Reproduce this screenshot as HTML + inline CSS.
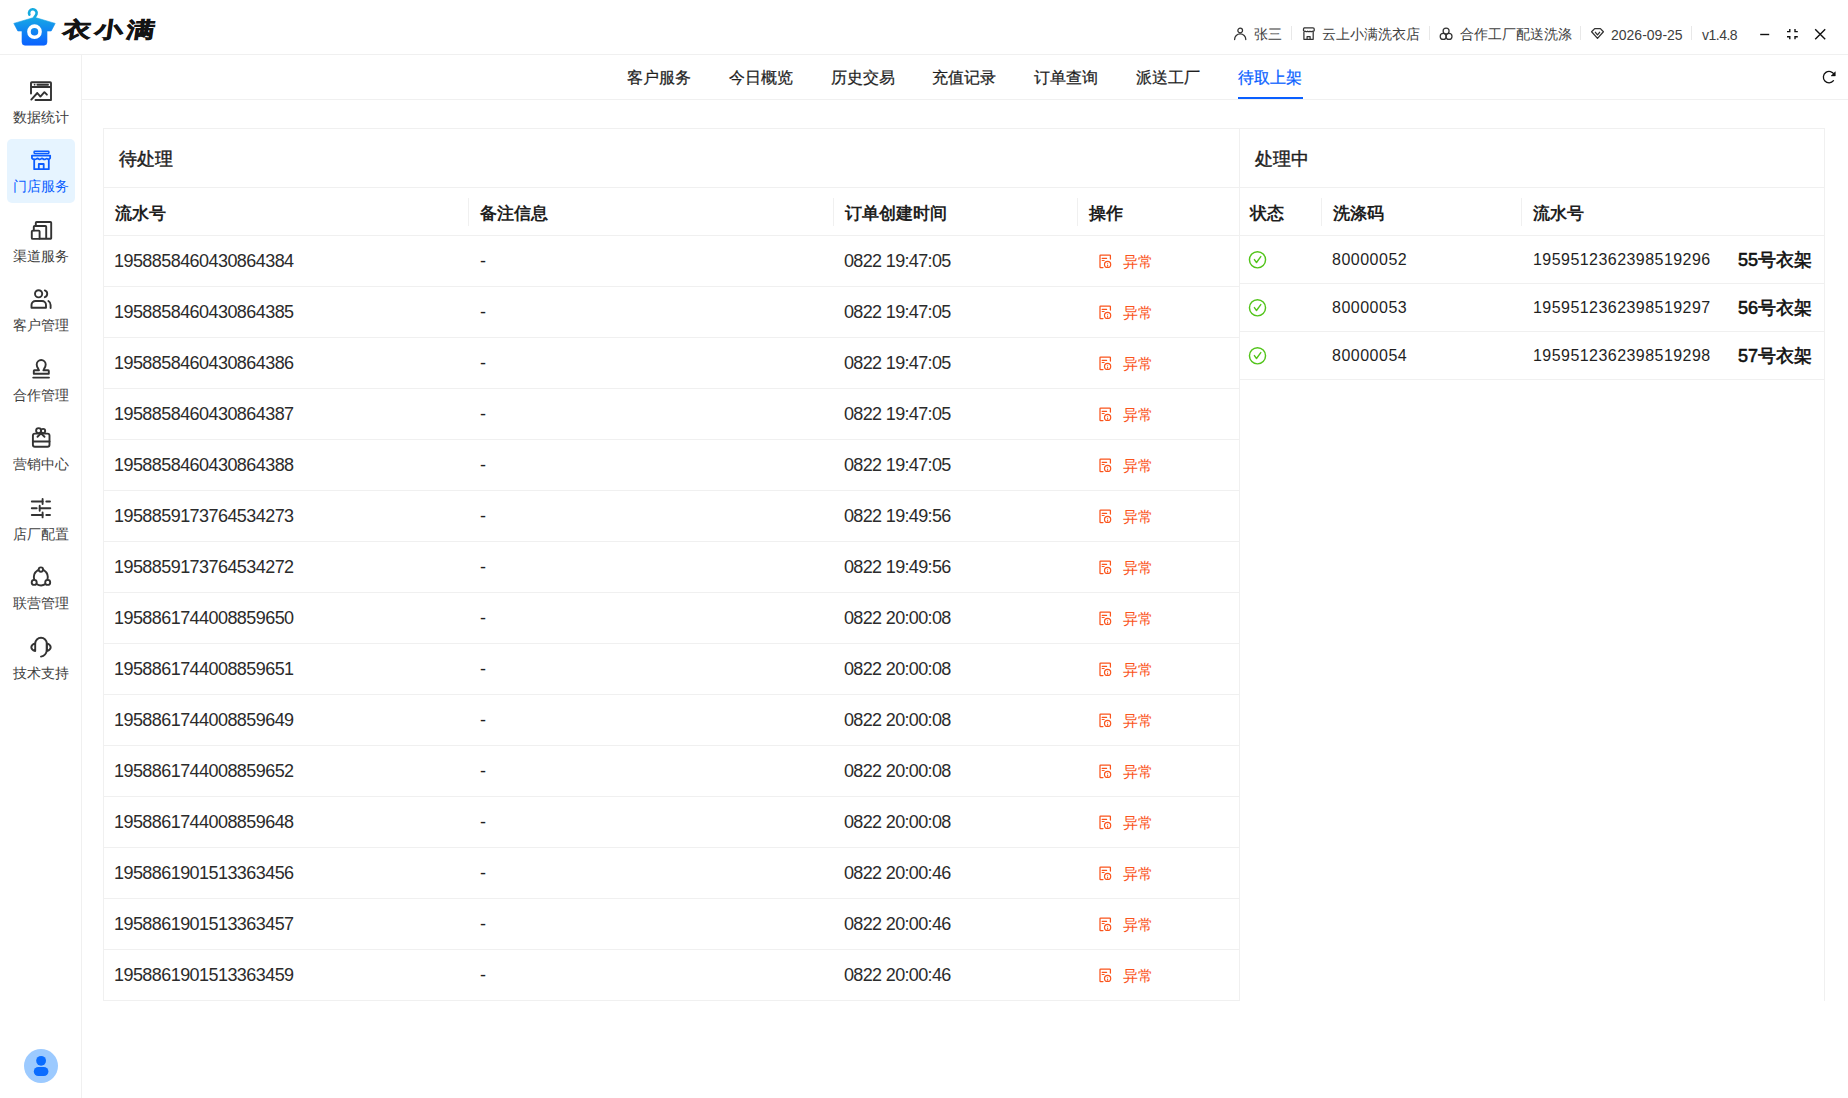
<!DOCTYPE html>
<html><head><meta charset="utf-8"><title>衣小满</title>
<style>
html,body{margin:0;padding:0;background:#fff;}
body{width:1848px;height:1098px;position:relative;overflow:hidden;font-family:"Liberation Sans",sans-serif;}
.t{position:absolute;white-space:nowrap;}
.r{position:absolute;}
.s{position:absolute;overflow:visible;}
</style></head><body>
<div class="r" style="left:0px;top:54px;width:1848px;height:1px;background:#f0f0f0;"></div>
<svg class="s" style="left:0px;top:0px" width="60" height="50" viewBox="0 0 60 50">
<defs><linearGradient id="lg" x1="0" y1="17" x2="0" y2="45" gradientUnits="userSpaceOnUse">
<stop offset="0" stop-color="#17a9e4"/><stop offset="1" stop-color="#0a62ff"/></linearGradient></defs>
<path d="M29.4 14.6 A3.8 3.8 0 1 1 36.5 14 Q35.9 15.6 34.5 17.2" fill="none" stroke="#15aadf" stroke-width="2.6" stroke-linecap="round"/>
<path d="M34.5 17.3 L55.2 23.4 L51.2 31 L47 31 L47 42 Q47 45.2 44 45.2 L25 45.2 Q22 45.2 22 42 L22 31 L17.8 31 L13.8 23.4 Z" fill="url(#lg)" stroke="url(#lg)" stroke-width="0.6" stroke-linejoin="round"/>
<circle cx="34.5" cy="31.7" r="5.55" fill="none" stroke="#fff" stroke-width="3.6"/>
</svg>
<div class="t" style="left:63px;top:15px;font-size:28px;line-height:30px;color:#141414;font-weight:900;letter-spacing:4px;-webkit-text-stroke:0.9px #141414;transform:scaleY(0.76) skewX(-6deg);transform-origin:0 50%;">衣小满</div>
<svg class="s" style="left:1232px;top:26px" width="16" height="16" viewBox="0 0 16 16"><circle cx="8.2" cy="4.5" r="2.35" fill="none" stroke="#333" stroke-width="1.25"/><path d="M2.6 13.5 a5.6 5.6 0 0 1 11.2 0" fill="none" stroke="#333" stroke-width="1.3" stroke-linecap="round"/></svg>
<div class="t" style="left:1254px;top:24px;font-size:14px;line-height:20px;color:#404040;font-weight:normal;">张三</div>
<div class="r" style="left:1291px;top:26px;width:1px;height:14px;background:#e8e8e8;"></div>
<svg class="s" style="left:1300px;top:25px" width="17" height="17" viewBox="0 0 17 17"><path d="M4.1 2.9 H13 a1.2 1.2 0 0 1 1.2 1.2 V5.6 q-.7 1.2 -1.9 .6 q-1.1 .9 -2.3 0 q-1.1 .9 -2.3 0 q-1.1 .9 -2.3 0 q-1.2 .6 -1.9 -.6 V4.1 a1.2 1.2 0 0 1 1.2 -1.2 z M3.9 7 V14.3 H13.2 V7 M7.1 14.3 V11.6 H10.1 V14.3" fill="none" stroke="#333" stroke-width="1.25" stroke-linejoin="round"/></svg>
<div class="t" style="left:1322px;top:24px;font-size:14px;line-height:20px;color:#404040;font-weight:normal;">云上小满洗衣店</div>
<div class="r" style="left:1429px;top:26px;width:1px;height:14px;background:#e8e8e8;"></div>
<svg class="s" style="left:1437px;top:26px" width="17" height="16" viewBox="0 0 17 16"><circle cx="9.1" cy="5" r="3" fill="none" stroke="#333" stroke-width="1.25"/><circle cx="6.2" cy="10.4" r="3" fill="none" stroke="#333" stroke-width="1.25"/><circle cx="12" cy="10.4" r="3" fill="none" stroke="#333" stroke-width="1.25"/></svg>
<div class="t" style="left:1460px;top:24px;font-size:14px;line-height:20px;color:#404040;font-weight:normal;">合作工厂配送洗涤</div>
<div class="r" style="left:1580px;top:26px;width:1px;height:14px;background:#e8e8e8;"></div>
<svg class="s" style="left:1589px;top:26px" width="17" height="16" viewBox="0 0 17 16"><path d="M5.7 2.6 h5.7 l3 3.2 l-5.9 6.6 l-5.9 -6.6 z" fill="none" stroke="#333" stroke-width="1.3" stroke-linejoin="round"/><path d="M6.4 6.3 l2.1 2.6 l2.1 -2.6" fill="none" stroke="#333" stroke-width="1.3" stroke-linecap="round" stroke-linejoin="round"/></svg>
<div class="t" style="left:1611px;top:25px;font-size:14px;line-height:20px;color:#404040;font-weight:normal;">2026-09-25</div>
<div class="r" style="left:1691px;top:26px;width:1px;height:14px;background:#e8e8e8;"></div>
<div class="t" style="left:1702px;top:25px;font-size:14px;line-height:20px;color:#404040;font-weight:normal;letter-spacing:-0.5px;">v1.4.8</div>
<svg class="s" style="left:1755px;top:22px" width="80" height="24" viewBox="0 0 80 24">
<path d="M5.2 12.5 h9" stroke="#111" stroke-width="1.4"/>
<path d="M34.8 7 v2.6 h-2.8 M40 7 v2.6 h2.8 M32 14.7 h2.8 v2.6 M42.8 14.7 h-2.8 v2.6" fill="none" stroke="#111" stroke-width="1.4"/>
<path d="M60.2 7.2 l10 10 M70.2 7.2 l-10 10" stroke="#111" stroke-width="1.4"/>
</svg>
<div class="r" style="left:81px;top:55px;width:1px;height:1043px;background:#f0f0f0;"></div>
<div class="r" style="left:7px;top:139px;width:68px;height:64px;background:#e6f4ff;border-radius:5px;"></div>
<div class="t" style="left:13px;top:107.0px;font-size:14px;line-height:20px;color:#404040;font-weight:normal;width:56px;text-align:center;">数据统计</div>
<div class="t" style="left:13px;top:176.4px;font-size:14px;line-height:20px;color:#0a5fff;font-weight:normal;width:56px;text-align:center;">门店服务</div>
<div class="t" style="left:13px;top:245.9px;font-size:14px;line-height:20px;color:#404040;font-weight:normal;width:56px;text-align:center;">渠道服务</div>
<div class="t" style="left:13px;top:315.3px;font-size:14px;line-height:20px;color:#404040;font-weight:normal;width:56px;text-align:center;">客户管理</div>
<div class="t" style="left:13px;top:384.8px;font-size:14px;line-height:20px;color:#404040;font-weight:normal;width:56px;text-align:center;">合作管理</div>
<div class="t" style="left:13px;top:454.2px;font-size:14px;line-height:20px;color:#404040;font-weight:normal;width:56px;text-align:center;">营销中心</div>
<div class="t" style="left:13px;top:523.6px;font-size:14px;line-height:20px;color:#404040;font-weight:normal;width:56px;text-align:center;">店厂配置</div>
<div class="t" style="left:13px;top:593.1px;font-size:14px;line-height:20px;color:#404040;font-weight:normal;width:56px;text-align:center;">联营管理</div>
<div class="t" style="left:13px;top:662.5px;font-size:14px;line-height:20px;color:#404040;font-weight:normal;width:56px;text-align:center;">技术支持</div>
<svg class="s" style="left:25px;top:75.0px" width="32" height="32" viewBox="0 0 32 32"><path d="M6 18.6 V8 a0.8 0.8 0 0 1 .8 -.8 h18.4 a.8 .8 0 0 1 .8 .8 V25 H10.5 M6 12 h20" fill="none" stroke="#333" stroke-width="1.9" stroke-linecap="round" stroke-linejoin="round"/><circle cx="9.6" cy="9.7" r=".9" fill="#333"/><path d="M12.4 9.7 h10.6" fill="none" stroke="#333" stroke-width="1.9" stroke-linecap="round" stroke-linejoin="round"/><path d="M6.3 24.6 L12.3 18 L15.4 21.6 L19.4 17.2 L21.9 19.7" fill="none" stroke="#333" stroke-width="1.9" stroke-linecap="round" stroke-linejoin="round"/></svg>
<svg class="s" style="left:25px;top:144.4px" width="32" height="32" viewBox="0 0 32 32"><g fill="none" stroke="#0a5cff" stroke-width="1.8" stroke-linejoin="round" stroke-linecap="round"><rect x="9.1" y="7.35" width="14.8" height="2.1" rx=".6" stroke-width="1.5"/><path d="M6.95 11.6 H25.15 V14.1 Q24.3 15.6 22.9 15.1 Q21.8 14.2 20.7 14.9 Q19.2 15.8 18.3 15 Q17 14.1 16 14.9 Q14.9 15.8 13.7 15 Q12.6 14.1 11.3 14.9 Q10.2 15.8 8.9 15.1 Q7.6 15.4 6.95 14.1 Z"/><path d="M9.2 16.2 V25.2 H23.8 V16.2 M13.8 25 V20 h4.9 V25"/></g></svg>
<svg class="s" style="left:25px;top:213.9px" width="32" height="32" viewBox="0 0 32 32"><rect x="6.8" y="16.6" width="7.8" height="8.3" rx="1" fill="none" stroke="#333" stroke-width="1.9" stroke-linecap="round" stroke-linejoin="round" stroke-width="1.7"/><path d="M8.8 16.4 V12.8 a.8 .8 0 0 1 .8 -.8 h10.8 a.8 .8 0 0 1 .8 .8 V24.8 H14.6 M10.8 11.8 V8.8 a.8 .8 0 0 1 .8 -.8 h13.8 a.8 .8 0 0 1 .8 .8 V24 a.8 .8 0 0 1 -.8 .8 H21.2" fill="none" stroke="#333" stroke-width="1.9" stroke-linecap="round" stroke-linejoin="round" stroke-width="1.7"/></svg>
<svg class="s" style="left:25px;top:283.3px" width="32" height="32" viewBox="0 0 32 32"><circle cx="13.6" cy="10.8" r="3.6" fill="none" stroke="#333" stroke-width="1.9" stroke-linecap="round" stroke-linejoin="round" stroke-width="1.7"/><path d="M19.8 7.4 a3.6 3.6 0 0 1 0 6.8" fill="none" stroke="#333" stroke-width="1.9" stroke-linecap="round" stroke-linejoin="round" stroke-width="1.7"/><path d="M6.5 24.7 V22 a4 4 0 0 1 4 -4 h6.5 a4 4 0 0 1 4 4 v2.7 z" fill="none" stroke="#333" stroke-width="1.9" stroke-linecap="round" stroke-linejoin="round" stroke-width="1.7"/><path d="M23.4 18 a4.6 4.6 0 0 1 2.2 4 v3" fill="none" stroke="#333" stroke-width="1.9" stroke-linecap="round" stroke-linejoin="round" stroke-width="1.7"/></svg>
<svg class="s" style="left:25px;top:352.8px" width="32" height="32" viewBox="0 0 32 32"><g transform="translate(0,-0.8)"><path d="M14 18.1 L13.2 16.4 q-1.5 -2.2 -1.5 -4.1 a4.5 4.5 0 0 1 9 0 q0 1.9 -1.5 4.1 L18.4 18.1 H23.2 a.6 .6 0 0 1 .6 .6 V21.6 H8.8 V18.7 a.6 .6 0 0 1 .6 -.6 z" fill="none" stroke="#333" stroke-width="1.9" stroke-linecap="round" stroke-linejoin="round" stroke-width="1.7"/><path d="M8.2 25.4 h15.8" fill="none" stroke="#333" stroke-width="1.9" stroke-linecap="round" stroke-linejoin="round" stroke-width="1.7"/></g></svg>
<svg class="s" style="left:25px;top:422.2px" width="32" height="32" viewBox="0 0 32 32"><rect x="7.9" y="11.6" width="16.6" height="13.2" rx="2" fill="none" stroke="#333" stroke-width="1.9" stroke-linecap="round" stroke-linejoin="round" stroke-width="1.8"/><path d="M7.9 19.5 h16.6" fill="none" stroke="#333" stroke-width="1.9" stroke-linecap="round" stroke-linejoin="round" stroke-width="1.8"/><circle cx="13.6" cy="8.6" r="2.5" fill="none" stroke="#333" stroke-width="1.9" stroke-linecap="round" stroke-linejoin="round" stroke-width="1.6"/><circle cx="18.1" cy="9" r="2.1" fill="none" stroke="#333" stroke-width="1.9" stroke-linecap="round" stroke-linejoin="round" stroke-width="1.6"/><path d="M16 11.4 l-3.5 3.4 M16 11.4 l3.5 3.4" fill="none" stroke="#333" stroke-width="1.9" stroke-linecap="round" stroke-linejoin="round" stroke-width="1.6"/></svg>
<svg class="s" style="left:25px;top:491.6px" width="32" height="32" viewBox="0 0 32 32"><path d="M6.8 9.5 h10.8 M21.3 9.5 h3.7 M6.8 16.3 h4.9 M14.7 16.3 h10.6 M6.8 23 h10.8 M21.3 23 h3.7" fill="none" stroke="#333" stroke-width="1.9" stroke-linecap="round" stroke-linejoin="round" stroke-width="1.8"/><path d="M17.6 7 v5 M14.7 13.8 v5 M17.6 20.4 v5" fill="none" stroke="#333" stroke-width="1.9" stroke-linecap="round" stroke-linejoin="round" stroke-width="2"/></svg>
<svg class="s" style="left:25px;top:561.1px" width="32" height="32" viewBox="0 0 32 32"><path d="M12.7 9.3 A8.7 8.7 0 0 0 9.2 18.6 M11.5 23 A8.7 8.7 0 0 0 20.4 23.2 M22.4 18.7 A8.7 8.7 0 0 0 19 9.3" fill="none" stroke="#333" stroke-width="1.9" stroke-linecap="round" stroke-linejoin="round" stroke-width="1.7"/><circle cx="15.9" cy="8.6" r="2.2" fill="none" stroke="#333" stroke-width="1.9" stroke-linecap="round" stroke-linejoin="round" stroke-width="1.6"/><circle cx="9.2" cy="21.4" r="2.5" fill="none" stroke="#333" stroke-width="1.9" stroke-linecap="round" stroke-linejoin="round" stroke-width="1.6"/><circle cx="22.7" cy="21.4" r="2.5" fill="none" stroke="#333" stroke-width="1.9" stroke-linecap="round" stroke-linejoin="round" stroke-width="1.6"/></svg>
<svg class="s" style="left:25px;top:630.5px" width="32" height="32" viewBox="0 0 32 32"><path d="M10.2 12.6 a5.8 5.8 0 0 1 11.6 0 V19 a7 7 0 0 1 -5.8 6.6" fill="none" stroke="#333" stroke-width="1.9" stroke-linecap="round" stroke-linejoin="round" stroke-width="1.7"/><path d="M10.2 12.4 q-3.9 1.2 -3.9 3.8 q0 2.6 3.9 3.8 z M21.8 12.4 q3.9 1.2 3.9 3.8 q0 2.6 -3.9 3.8 z" fill="none" stroke="#333" stroke-width="1.9" stroke-linecap="round" stroke-linejoin="round" stroke-width="1.6"/></svg>
<svg class="s" style="left:24px;top:1049px" width="34" height="34" viewBox="0 0 34 34"><circle cx="17" cy="17" r="17" fill="#9ccaff"/><circle cx="17.1" cy="11.8" r="4.9" fill="#0a6cff"/><rect x="9.8" y="18" width="14.6" height="9" rx="4.5" fill="#0a6cff"/></svg>
<div class="r" style="left:82px;top:99px;width:1766px;height:1px;background:#f0f0f0;"></div>
<div class="t" style="left:627.0px;top:68px;font-size:16px;line-height:20px;color:#1f1f1f;font-weight:normal;-webkit-text-stroke:0.25px #1f1f1f;">客户服务</div>
<div class="t" style="left:728.8px;top:68px;font-size:16px;line-height:20px;color:#1f1f1f;font-weight:normal;-webkit-text-stroke:0.25px #1f1f1f;">今日概览</div>
<div class="t" style="left:830.6px;top:68px;font-size:16px;line-height:20px;color:#1f1f1f;font-weight:normal;-webkit-text-stroke:0.25px #1f1f1f;">历史交易</div>
<div class="t" style="left:932.4px;top:68px;font-size:16px;line-height:20px;color:#1f1f1f;font-weight:normal;-webkit-text-stroke:0.25px #1f1f1f;">充值记录</div>
<div class="t" style="left:1034.2px;top:68px;font-size:16px;line-height:20px;color:#1f1f1f;font-weight:normal;-webkit-text-stroke:0.25px #1f1f1f;">订单查询</div>
<div class="t" style="left:1136.0px;top:68px;font-size:16px;line-height:20px;color:#1f1f1f;font-weight:normal;-webkit-text-stroke:0.25px #1f1f1f;">派送工厂</div>
<div class="t" style="left:1237.8px;top:68px;font-size:16px;line-height:20px;color:#0a5fff;font-weight:normal;-webkit-text-stroke:0.25px #0a5fff;">待取上架</div>
<div class="r" style="left:1238px;top:97px;width:65px;height:2px;background:#0a5fff;"></div>
<svg class="s" style="left:1820.7px;top:68px" width="18" height="18" viewBox="0 0 18 18"><path d="M13.2 6.6 A5.7 5.7 0 1 0 12.5 12.7" fill="none" stroke="#111" stroke-width="1.3" stroke-linecap="round"/><path d="M10 7.9 L14.3 7.9 L14.3 3.7 Z" fill="#111" stroke="#111" stroke-width="0.5" stroke-linejoin="round"/></svg>
<div class="r" style="left:103px;top:128px;width:1722px;height:1px;background:#f0f0f0;"></div>
<div class="r" style="left:103px;top:128px;width:1px;height:873px;background:#f0f0f0;"></div>
<div class="r" style="left:1239px;top:128px;width:1px;height:873px;background:#f0f0f0;"></div>
<div class="r" style="left:1824px;top:128px;width:1px;height:873px;background:#f0f0f0;"></div>
<div class="t" style="left:119px;top:148px;font-size:18px;line-height:22px;color:#1f1f1f;font-weight:normal;-webkit-text-stroke:0.45px #1f1f1f;">待处理</div>
<div class="r" style="left:103px;top:187px;width:1136px;height:1px;background:#f0f0f0;"></div>
<div class="t" style="left:115px;top:204px;font-size:17px;line-height:20px;color:#1f1f1f;font-weight:bold;">流水号</div>
<div class="r" style="left:468px;top:198px;width:1px;height:28px;background:#f0f0f0;"></div>
<div class="t" style="left:480px;top:204px;font-size:17px;line-height:20px;color:#1f1f1f;font-weight:bold;">备注信息</div>
<div class="r" style="left:833px;top:198px;width:1px;height:28px;background:#f0f0f0;"></div>
<div class="t" style="left:845px;top:204px;font-size:17px;line-height:20px;color:#1f1f1f;font-weight:bold;">订单创建时间</div>
<div class="r" style="left:1077px;top:198px;width:1px;height:28px;background:#f0f0f0;"></div>
<div class="t" style="left:1089px;top:204px;font-size:17px;line-height:20px;color:#1f1f1f;font-weight:bold;">操作</div>
<div class="r" style="left:103px;top:235px;width:1136px;height:1px;background:#f0f0f0;"></div>
<div class="t" style="left:114px;top:251px;font-size:18px;line-height:20px;color:#2b2b2b;font-weight:normal;letter-spacing:-0.56px;">1958858460430864384</div>
<div class="t" style="left:480px;top:251px;font-size:18px;line-height:20px;color:#1f1f1f;font-weight:normal;">-</div>
<div class="t" style="left:844px;top:251px;font-size:18px;line-height:20px;color:#2b2b2b;font-weight:normal;letter-spacing:-0.65px;">0822 19:47:05</div>
<svg class="s" style="left:1099px;top:254px" width="14" height="15" viewBox="0 0 14 15"><path d="M4 13.6 H1.6 a.6 .6 0 0 1 -.6 -.6 V1.6 a.6 .6 0 0 1 .6 -.6 h9.2 a.6 .6 0 0 1 .6 .6 V5" fill="none" stroke="#fa541c" stroke-width="1.25" stroke-linecap="round"/><path d="M3.2 4.4 h4.4 M3.2 6.5 h1.9" stroke="#fa541c" stroke-width="1.2" stroke-linecap="round"/><circle cx="8.6" cy="10.4" r="3.1" fill="none" stroke="#fa541c" stroke-width="1.2"/><circle cx="8.6" cy="9.3" r=".55" fill="#fa541c"/><path d="M8.6 11 v1.3" stroke="#fa541c" stroke-width="1.1" stroke-linecap="round"/></svg>
<div class="t" style="left:1123px;top:252px;font-size:15px;line-height:20px;color:#fa541c;font-weight:normal;">异常</div>
<div class="r" style="left:103px;top:286px;width:1136px;height:1px;background:#f0f0f0;"></div>
<div class="t" style="left:114px;top:302px;font-size:18px;line-height:20px;color:#2b2b2b;font-weight:normal;letter-spacing:-0.56px;">1958858460430864385</div>
<div class="t" style="left:480px;top:302px;font-size:18px;line-height:20px;color:#1f1f1f;font-weight:normal;">-</div>
<div class="t" style="left:844px;top:302px;font-size:18px;line-height:20px;color:#2b2b2b;font-weight:normal;letter-spacing:-0.65px;">0822 19:47:05</div>
<svg class="s" style="left:1099px;top:305px" width="14" height="15" viewBox="0 0 14 15"><path d="M4 13.6 H1.6 a.6 .6 0 0 1 -.6 -.6 V1.6 a.6 .6 0 0 1 .6 -.6 h9.2 a.6 .6 0 0 1 .6 .6 V5" fill="none" stroke="#fa541c" stroke-width="1.25" stroke-linecap="round"/><path d="M3.2 4.4 h4.4 M3.2 6.5 h1.9" stroke="#fa541c" stroke-width="1.2" stroke-linecap="round"/><circle cx="8.6" cy="10.4" r="3.1" fill="none" stroke="#fa541c" stroke-width="1.2"/><circle cx="8.6" cy="9.3" r=".55" fill="#fa541c"/><path d="M8.6 11 v1.3" stroke="#fa541c" stroke-width="1.1" stroke-linecap="round"/></svg>
<div class="t" style="left:1123px;top:303px;font-size:15px;line-height:20px;color:#fa541c;font-weight:normal;">异常</div>
<div class="r" style="left:103px;top:337px;width:1136px;height:1px;background:#f0f0f0;"></div>
<div class="t" style="left:114px;top:353px;font-size:18px;line-height:20px;color:#2b2b2b;font-weight:normal;letter-spacing:-0.56px;">1958858460430864386</div>
<div class="t" style="left:480px;top:353px;font-size:18px;line-height:20px;color:#1f1f1f;font-weight:normal;">-</div>
<div class="t" style="left:844px;top:353px;font-size:18px;line-height:20px;color:#2b2b2b;font-weight:normal;letter-spacing:-0.65px;">0822 19:47:05</div>
<svg class="s" style="left:1099px;top:356px" width="14" height="15" viewBox="0 0 14 15"><path d="M4 13.6 H1.6 a.6 .6 0 0 1 -.6 -.6 V1.6 a.6 .6 0 0 1 .6 -.6 h9.2 a.6 .6 0 0 1 .6 .6 V5" fill="none" stroke="#fa541c" stroke-width="1.25" stroke-linecap="round"/><path d="M3.2 4.4 h4.4 M3.2 6.5 h1.9" stroke="#fa541c" stroke-width="1.2" stroke-linecap="round"/><circle cx="8.6" cy="10.4" r="3.1" fill="none" stroke="#fa541c" stroke-width="1.2"/><circle cx="8.6" cy="9.3" r=".55" fill="#fa541c"/><path d="M8.6 11 v1.3" stroke="#fa541c" stroke-width="1.1" stroke-linecap="round"/></svg>
<div class="t" style="left:1123px;top:354px;font-size:15px;line-height:20px;color:#fa541c;font-weight:normal;">异常</div>
<div class="r" style="left:103px;top:388px;width:1136px;height:1px;background:#f0f0f0;"></div>
<div class="t" style="left:114px;top:404px;font-size:18px;line-height:20px;color:#2b2b2b;font-weight:normal;letter-spacing:-0.56px;">1958858460430864387</div>
<div class="t" style="left:480px;top:404px;font-size:18px;line-height:20px;color:#1f1f1f;font-weight:normal;">-</div>
<div class="t" style="left:844px;top:404px;font-size:18px;line-height:20px;color:#2b2b2b;font-weight:normal;letter-spacing:-0.65px;">0822 19:47:05</div>
<svg class="s" style="left:1099px;top:407px" width="14" height="15" viewBox="0 0 14 15"><path d="M4 13.6 H1.6 a.6 .6 0 0 1 -.6 -.6 V1.6 a.6 .6 0 0 1 .6 -.6 h9.2 a.6 .6 0 0 1 .6 .6 V5" fill="none" stroke="#fa541c" stroke-width="1.25" stroke-linecap="round"/><path d="M3.2 4.4 h4.4 M3.2 6.5 h1.9" stroke="#fa541c" stroke-width="1.2" stroke-linecap="round"/><circle cx="8.6" cy="10.4" r="3.1" fill="none" stroke="#fa541c" stroke-width="1.2"/><circle cx="8.6" cy="9.3" r=".55" fill="#fa541c"/><path d="M8.6 11 v1.3" stroke="#fa541c" stroke-width="1.1" stroke-linecap="round"/></svg>
<div class="t" style="left:1123px;top:405px;font-size:15px;line-height:20px;color:#fa541c;font-weight:normal;">异常</div>
<div class="r" style="left:103px;top:439px;width:1136px;height:1px;background:#f0f0f0;"></div>
<div class="t" style="left:114px;top:455px;font-size:18px;line-height:20px;color:#2b2b2b;font-weight:normal;letter-spacing:-0.56px;">1958858460430864388</div>
<div class="t" style="left:480px;top:455px;font-size:18px;line-height:20px;color:#1f1f1f;font-weight:normal;">-</div>
<div class="t" style="left:844px;top:455px;font-size:18px;line-height:20px;color:#2b2b2b;font-weight:normal;letter-spacing:-0.65px;">0822 19:47:05</div>
<svg class="s" style="left:1099px;top:458px" width="14" height="15" viewBox="0 0 14 15"><path d="M4 13.6 H1.6 a.6 .6 0 0 1 -.6 -.6 V1.6 a.6 .6 0 0 1 .6 -.6 h9.2 a.6 .6 0 0 1 .6 .6 V5" fill="none" stroke="#fa541c" stroke-width="1.25" stroke-linecap="round"/><path d="M3.2 4.4 h4.4 M3.2 6.5 h1.9" stroke="#fa541c" stroke-width="1.2" stroke-linecap="round"/><circle cx="8.6" cy="10.4" r="3.1" fill="none" stroke="#fa541c" stroke-width="1.2"/><circle cx="8.6" cy="9.3" r=".55" fill="#fa541c"/><path d="M8.6 11 v1.3" stroke="#fa541c" stroke-width="1.1" stroke-linecap="round"/></svg>
<div class="t" style="left:1123px;top:456px;font-size:15px;line-height:20px;color:#fa541c;font-weight:normal;">异常</div>
<div class="r" style="left:103px;top:490px;width:1136px;height:1px;background:#f0f0f0;"></div>
<div class="t" style="left:114px;top:506px;font-size:18px;line-height:20px;color:#2b2b2b;font-weight:normal;letter-spacing:-0.56px;">1958859173764534273</div>
<div class="t" style="left:480px;top:506px;font-size:18px;line-height:20px;color:#1f1f1f;font-weight:normal;">-</div>
<div class="t" style="left:844px;top:506px;font-size:18px;line-height:20px;color:#2b2b2b;font-weight:normal;letter-spacing:-0.65px;">0822 19:49:56</div>
<svg class="s" style="left:1099px;top:509px" width="14" height="15" viewBox="0 0 14 15"><path d="M4 13.6 H1.6 a.6 .6 0 0 1 -.6 -.6 V1.6 a.6 .6 0 0 1 .6 -.6 h9.2 a.6 .6 0 0 1 .6 .6 V5" fill="none" stroke="#fa541c" stroke-width="1.25" stroke-linecap="round"/><path d="M3.2 4.4 h4.4 M3.2 6.5 h1.9" stroke="#fa541c" stroke-width="1.2" stroke-linecap="round"/><circle cx="8.6" cy="10.4" r="3.1" fill="none" stroke="#fa541c" stroke-width="1.2"/><circle cx="8.6" cy="9.3" r=".55" fill="#fa541c"/><path d="M8.6 11 v1.3" stroke="#fa541c" stroke-width="1.1" stroke-linecap="round"/></svg>
<div class="t" style="left:1123px;top:507px;font-size:15px;line-height:20px;color:#fa541c;font-weight:normal;">异常</div>
<div class="r" style="left:103px;top:541px;width:1136px;height:1px;background:#f0f0f0;"></div>
<div class="t" style="left:114px;top:557px;font-size:18px;line-height:20px;color:#2b2b2b;font-weight:normal;letter-spacing:-0.56px;">1958859173764534272</div>
<div class="t" style="left:480px;top:557px;font-size:18px;line-height:20px;color:#1f1f1f;font-weight:normal;">-</div>
<div class="t" style="left:844px;top:557px;font-size:18px;line-height:20px;color:#2b2b2b;font-weight:normal;letter-spacing:-0.65px;">0822 19:49:56</div>
<svg class="s" style="left:1099px;top:560px" width="14" height="15" viewBox="0 0 14 15"><path d="M4 13.6 H1.6 a.6 .6 0 0 1 -.6 -.6 V1.6 a.6 .6 0 0 1 .6 -.6 h9.2 a.6 .6 0 0 1 .6 .6 V5" fill="none" stroke="#fa541c" stroke-width="1.25" stroke-linecap="round"/><path d="M3.2 4.4 h4.4 M3.2 6.5 h1.9" stroke="#fa541c" stroke-width="1.2" stroke-linecap="round"/><circle cx="8.6" cy="10.4" r="3.1" fill="none" stroke="#fa541c" stroke-width="1.2"/><circle cx="8.6" cy="9.3" r=".55" fill="#fa541c"/><path d="M8.6 11 v1.3" stroke="#fa541c" stroke-width="1.1" stroke-linecap="round"/></svg>
<div class="t" style="left:1123px;top:558px;font-size:15px;line-height:20px;color:#fa541c;font-weight:normal;">异常</div>
<div class="r" style="left:103px;top:592px;width:1136px;height:1px;background:#f0f0f0;"></div>
<div class="t" style="left:114px;top:608px;font-size:18px;line-height:20px;color:#2b2b2b;font-weight:normal;letter-spacing:-0.56px;">1958861744008859650</div>
<div class="t" style="left:480px;top:608px;font-size:18px;line-height:20px;color:#1f1f1f;font-weight:normal;">-</div>
<div class="t" style="left:844px;top:608px;font-size:18px;line-height:20px;color:#2b2b2b;font-weight:normal;letter-spacing:-0.65px;">0822 20:00:08</div>
<svg class="s" style="left:1099px;top:611px" width="14" height="15" viewBox="0 0 14 15"><path d="M4 13.6 H1.6 a.6 .6 0 0 1 -.6 -.6 V1.6 a.6 .6 0 0 1 .6 -.6 h9.2 a.6 .6 0 0 1 .6 .6 V5" fill="none" stroke="#fa541c" stroke-width="1.25" stroke-linecap="round"/><path d="M3.2 4.4 h4.4 M3.2 6.5 h1.9" stroke="#fa541c" stroke-width="1.2" stroke-linecap="round"/><circle cx="8.6" cy="10.4" r="3.1" fill="none" stroke="#fa541c" stroke-width="1.2"/><circle cx="8.6" cy="9.3" r=".55" fill="#fa541c"/><path d="M8.6 11 v1.3" stroke="#fa541c" stroke-width="1.1" stroke-linecap="round"/></svg>
<div class="t" style="left:1123px;top:609px;font-size:15px;line-height:20px;color:#fa541c;font-weight:normal;">异常</div>
<div class="r" style="left:103px;top:643px;width:1136px;height:1px;background:#f0f0f0;"></div>
<div class="t" style="left:114px;top:659px;font-size:18px;line-height:20px;color:#2b2b2b;font-weight:normal;letter-spacing:-0.56px;">1958861744008859651</div>
<div class="t" style="left:480px;top:659px;font-size:18px;line-height:20px;color:#1f1f1f;font-weight:normal;">-</div>
<div class="t" style="left:844px;top:659px;font-size:18px;line-height:20px;color:#2b2b2b;font-weight:normal;letter-spacing:-0.65px;">0822 20:00:08</div>
<svg class="s" style="left:1099px;top:662px" width="14" height="15" viewBox="0 0 14 15"><path d="M4 13.6 H1.6 a.6 .6 0 0 1 -.6 -.6 V1.6 a.6 .6 0 0 1 .6 -.6 h9.2 a.6 .6 0 0 1 .6 .6 V5" fill="none" stroke="#fa541c" stroke-width="1.25" stroke-linecap="round"/><path d="M3.2 4.4 h4.4 M3.2 6.5 h1.9" stroke="#fa541c" stroke-width="1.2" stroke-linecap="round"/><circle cx="8.6" cy="10.4" r="3.1" fill="none" stroke="#fa541c" stroke-width="1.2"/><circle cx="8.6" cy="9.3" r=".55" fill="#fa541c"/><path d="M8.6 11 v1.3" stroke="#fa541c" stroke-width="1.1" stroke-linecap="round"/></svg>
<div class="t" style="left:1123px;top:660px;font-size:15px;line-height:20px;color:#fa541c;font-weight:normal;">异常</div>
<div class="r" style="left:103px;top:694px;width:1136px;height:1px;background:#f0f0f0;"></div>
<div class="t" style="left:114px;top:710px;font-size:18px;line-height:20px;color:#2b2b2b;font-weight:normal;letter-spacing:-0.56px;">1958861744008859649</div>
<div class="t" style="left:480px;top:710px;font-size:18px;line-height:20px;color:#1f1f1f;font-weight:normal;">-</div>
<div class="t" style="left:844px;top:710px;font-size:18px;line-height:20px;color:#2b2b2b;font-weight:normal;letter-spacing:-0.65px;">0822 20:00:08</div>
<svg class="s" style="left:1099px;top:713px" width="14" height="15" viewBox="0 0 14 15"><path d="M4 13.6 H1.6 a.6 .6 0 0 1 -.6 -.6 V1.6 a.6 .6 0 0 1 .6 -.6 h9.2 a.6 .6 0 0 1 .6 .6 V5" fill="none" stroke="#fa541c" stroke-width="1.25" stroke-linecap="round"/><path d="M3.2 4.4 h4.4 M3.2 6.5 h1.9" stroke="#fa541c" stroke-width="1.2" stroke-linecap="round"/><circle cx="8.6" cy="10.4" r="3.1" fill="none" stroke="#fa541c" stroke-width="1.2"/><circle cx="8.6" cy="9.3" r=".55" fill="#fa541c"/><path d="M8.6 11 v1.3" stroke="#fa541c" stroke-width="1.1" stroke-linecap="round"/></svg>
<div class="t" style="left:1123px;top:711px;font-size:15px;line-height:20px;color:#fa541c;font-weight:normal;">异常</div>
<div class="r" style="left:103px;top:745px;width:1136px;height:1px;background:#f0f0f0;"></div>
<div class="t" style="left:114px;top:761px;font-size:18px;line-height:20px;color:#2b2b2b;font-weight:normal;letter-spacing:-0.56px;">1958861744008859652</div>
<div class="t" style="left:480px;top:761px;font-size:18px;line-height:20px;color:#1f1f1f;font-weight:normal;">-</div>
<div class="t" style="left:844px;top:761px;font-size:18px;line-height:20px;color:#2b2b2b;font-weight:normal;letter-spacing:-0.65px;">0822 20:00:08</div>
<svg class="s" style="left:1099px;top:764px" width="14" height="15" viewBox="0 0 14 15"><path d="M4 13.6 H1.6 a.6 .6 0 0 1 -.6 -.6 V1.6 a.6 .6 0 0 1 .6 -.6 h9.2 a.6 .6 0 0 1 .6 .6 V5" fill="none" stroke="#fa541c" stroke-width="1.25" stroke-linecap="round"/><path d="M3.2 4.4 h4.4 M3.2 6.5 h1.9" stroke="#fa541c" stroke-width="1.2" stroke-linecap="round"/><circle cx="8.6" cy="10.4" r="3.1" fill="none" stroke="#fa541c" stroke-width="1.2"/><circle cx="8.6" cy="9.3" r=".55" fill="#fa541c"/><path d="M8.6 11 v1.3" stroke="#fa541c" stroke-width="1.1" stroke-linecap="round"/></svg>
<div class="t" style="left:1123px;top:762px;font-size:15px;line-height:20px;color:#fa541c;font-weight:normal;">异常</div>
<div class="r" style="left:103px;top:796px;width:1136px;height:1px;background:#f0f0f0;"></div>
<div class="t" style="left:114px;top:812px;font-size:18px;line-height:20px;color:#2b2b2b;font-weight:normal;letter-spacing:-0.56px;">1958861744008859648</div>
<div class="t" style="left:480px;top:812px;font-size:18px;line-height:20px;color:#1f1f1f;font-weight:normal;">-</div>
<div class="t" style="left:844px;top:812px;font-size:18px;line-height:20px;color:#2b2b2b;font-weight:normal;letter-spacing:-0.65px;">0822 20:00:08</div>
<svg class="s" style="left:1099px;top:815px" width="14" height="15" viewBox="0 0 14 15"><path d="M4 13.6 H1.6 a.6 .6 0 0 1 -.6 -.6 V1.6 a.6 .6 0 0 1 .6 -.6 h9.2 a.6 .6 0 0 1 .6 .6 V5" fill="none" stroke="#fa541c" stroke-width="1.25" stroke-linecap="round"/><path d="M3.2 4.4 h4.4 M3.2 6.5 h1.9" stroke="#fa541c" stroke-width="1.2" stroke-linecap="round"/><circle cx="8.6" cy="10.4" r="3.1" fill="none" stroke="#fa541c" stroke-width="1.2"/><circle cx="8.6" cy="9.3" r=".55" fill="#fa541c"/><path d="M8.6 11 v1.3" stroke="#fa541c" stroke-width="1.1" stroke-linecap="round"/></svg>
<div class="t" style="left:1123px;top:813px;font-size:15px;line-height:20px;color:#fa541c;font-weight:normal;">异常</div>
<div class="r" style="left:103px;top:847px;width:1136px;height:1px;background:#f0f0f0;"></div>
<div class="t" style="left:114px;top:863px;font-size:18px;line-height:20px;color:#2b2b2b;font-weight:normal;letter-spacing:-0.56px;">1958861901513363456</div>
<div class="t" style="left:480px;top:863px;font-size:18px;line-height:20px;color:#1f1f1f;font-weight:normal;">-</div>
<div class="t" style="left:844px;top:863px;font-size:18px;line-height:20px;color:#2b2b2b;font-weight:normal;letter-spacing:-0.65px;">0822 20:00:46</div>
<svg class="s" style="left:1099px;top:866px" width="14" height="15" viewBox="0 0 14 15"><path d="M4 13.6 H1.6 a.6 .6 0 0 1 -.6 -.6 V1.6 a.6 .6 0 0 1 .6 -.6 h9.2 a.6 .6 0 0 1 .6 .6 V5" fill="none" stroke="#fa541c" stroke-width="1.25" stroke-linecap="round"/><path d="M3.2 4.4 h4.4 M3.2 6.5 h1.9" stroke="#fa541c" stroke-width="1.2" stroke-linecap="round"/><circle cx="8.6" cy="10.4" r="3.1" fill="none" stroke="#fa541c" stroke-width="1.2"/><circle cx="8.6" cy="9.3" r=".55" fill="#fa541c"/><path d="M8.6 11 v1.3" stroke="#fa541c" stroke-width="1.1" stroke-linecap="round"/></svg>
<div class="t" style="left:1123px;top:864px;font-size:15px;line-height:20px;color:#fa541c;font-weight:normal;">异常</div>
<div class="r" style="left:103px;top:898px;width:1136px;height:1px;background:#f0f0f0;"></div>
<div class="t" style="left:114px;top:914px;font-size:18px;line-height:20px;color:#2b2b2b;font-weight:normal;letter-spacing:-0.56px;">1958861901513363457</div>
<div class="t" style="left:480px;top:914px;font-size:18px;line-height:20px;color:#1f1f1f;font-weight:normal;">-</div>
<div class="t" style="left:844px;top:914px;font-size:18px;line-height:20px;color:#2b2b2b;font-weight:normal;letter-spacing:-0.65px;">0822 20:00:46</div>
<svg class="s" style="left:1099px;top:917px" width="14" height="15" viewBox="0 0 14 15"><path d="M4 13.6 H1.6 a.6 .6 0 0 1 -.6 -.6 V1.6 a.6 .6 0 0 1 .6 -.6 h9.2 a.6 .6 0 0 1 .6 .6 V5" fill="none" stroke="#fa541c" stroke-width="1.25" stroke-linecap="round"/><path d="M3.2 4.4 h4.4 M3.2 6.5 h1.9" stroke="#fa541c" stroke-width="1.2" stroke-linecap="round"/><circle cx="8.6" cy="10.4" r="3.1" fill="none" stroke="#fa541c" stroke-width="1.2"/><circle cx="8.6" cy="9.3" r=".55" fill="#fa541c"/><path d="M8.6 11 v1.3" stroke="#fa541c" stroke-width="1.1" stroke-linecap="round"/></svg>
<div class="t" style="left:1123px;top:915px;font-size:15px;line-height:20px;color:#fa541c;font-weight:normal;">异常</div>
<div class="r" style="left:103px;top:949px;width:1136px;height:1px;background:#f0f0f0;"></div>
<div class="t" style="left:114px;top:965px;font-size:18px;line-height:20px;color:#2b2b2b;font-weight:normal;letter-spacing:-0.56px;">1958861901513363459</div>
<div class="t" style="left:480px;top:965px;font-size:18px;line-height:20px;color:#1f1f1f;font-weight:normal;">-</div>
<div class="t" style="left:844px;top:965px;font-size:18px;line-height:20px;color:#2b2b2b;font-weight:normal;letter-spacing:-0.65px;">0822 20:00:46</div>
<svg class="s" style="left:1099px;top:968px" width="14" height="15" viewBox="0 0 14 15"><path d="M4 13.6 H1.6 a.6 .6 0 0 1 -.6 -.6 V1.6 a.6 .6 0 0 1 .6 -.6 h9.2 a.6 .6 0 0 1 .6 .6 V5" fill="none" stroke="#fa541c" stroke-width="1.25" stroke-linecap="round"/><path d="M3.2 4.4 h4.4 M3.2 6.5 h1.9" stroke="#fa541c" stroke-width="1.2" stroke-linecap="round"/><circle cx="8.6" cy="10.4" r="3.1" fill="none" stroke="#fa541c" stroke-width="1.2"/><circle cx="8.6" cy="9.3" r=".55" fill="#fa541c"/><path d="M8.6 11 v1.3" stroke="#fa541c" stroke-width="1.1" stroke-linecap="round"/></svg>
<div class="t" style="left:1123px;top:966px;font-size:15px;line-height:20px;color:#fa541c;font-weight:normal;">异常</div>
<div class="r" style="left:103px;top:1000px;width:1136px;height:1px;background:#f0f0f0;"></div>
<div class="t" style="left:1255px;top:148px;font-size:18px;line-height:22px;color:#1f1f1f;font-weight:normal;-webkit-text-stroke:0.45px #1f1f1f;">处理中</div>
<div class="r" style="left:1239px;top:187px;width:585px;height:1px;background:#f0f0f0;"></div>
<div class="t" style="left:1250px;top:204px;font-size:17px;line-height:20px;color:#1f1f1f;font-weight:bold;">状态</div>
<div class="r" style="left:1321px;top:198px;width:1px;height:28px;background:#f0f0f0;"></div>
<div class="t" style="left:1333px;top:204px;font-size:17px;line-height:20px;color:#1f1f1f;font-weight:bold;">洗涤码</div>
<div class="r" style="left:1521px;top:198px;width:1px;height:28px;background:#f0f0f0;"></div>
<div class="t" style="left:1533px;top:204px;font-size:17px;line-height:20px;color:#1f1f1f;font-weight:bold;">流水号</div>
<div class="r" style="left:1239px;top:235px;width:585px;height:1px;background:#f0f0f0;"></div>
<svg class="s" style="left:1248px;top:251px" width="18" height="18" viewBox="0 0 18 18"><circle cx="9.5" cy="8.8" r="8.05" fill="none" stroke="#52c41a" stroke-width="1.45"/><path d="M6.4 8.6 L8.5 11.5 L12.8 5.6" fill="none" stroke="#52c41a" stroke-width="1.4" stroke-linecap="round" stroke-linejoin="round"/></svg>
<div class="t" style="left:1332px;top:250px;font-size:16px;line-height:20px;color:#1f1f1f;font-weight:normal;letter-spacing:0.5px;">80000052</div>
<div class="t" style="left:1533px;top:250px;font-size:16px;line-height:20px;color:#1f1f1f;font-weight:normal;letter-spacing:0.45px;">1959512362398519296</div>
<div class="t" style="left:1738px;top:249px;font-size:18px;line-height:22px;color:#111;font-weight:normal;-webkit-text-stroke:0.6px #111;">55号衣架</div>
<div class="r" style="left:1239px;top:283px;width:585px;height:1px;background:#f0f0f0;"></div>
<svg class="s" style="left:1248px;top:299px" width="18" height="18" viewBox="0 0 18 18"><circle cx="9.5" cy="8.8" r="8.05" fill="none" stroke="#52c41a" stroke-width="1.45"/><path d="M6.4 8.6 L8.5 11.5 L12.8 5.6" fill="none" stroke="#52c41a" stroke-width="1.4" stroke-linecap="round" stroke-linejoin="round"/></svg>
<div class="t" style="left:1332px;top:298px;font-size:16px;line-height:20px;color:#1f1f1f;font-weight:normal;letter-spacing:0.5px;">80000053</div>
<div class="t" style="left:1533px;top:298px;font-size:16px;line-height:20px;color:#1f1f1f;font-weight:normal;letter-spacing:0.45px;">1959512362398519297</div>
<div class="t" style="left:1738px;top:297px;font-size:18px;line-height:22px;color:#111;font-weight:normal;-webkit-text-stroke:0.6px #111;">56号衣架</div>
<div class="r" style="left:1239px;top:331px;width:585px;height:1px;background:#f0f0f0;"></div>
<svg class="s" style="left:1248px;top:347px" width="18" height="18" viewBox="0 0 18 18"><circle cx="9.5" cy="8.8" r="8.05" fill="none" stroke="#52c41a" stroke-width="1.45"/><path d="M6.4 8.6 L8.5 11.5 L12.8 5.6" fill="none" stroke="#52c41a" stroke-width="1.4" stroke-linecap="round" stroke-linejoin="round"/></svg>
<div class="t" style="left:1332px;top:346px;font-size:16px;line-height:20px;color:#1f1f1f;font-weight:normal;letter-spacing:0.5px;">80000054</div>
<div class="t" style="left:1533px;top:346px;font-size:16px;line-height:20px;color:#1f1f1f;font-weight:normal;letter-spacing:0.45px;">1959512362398519298</div>
<div class="t" style="left:1738px;top:345px;font-size:18px;line-height:22px;color:#111;font-weight:normal;-webkit-text-stroke:0.6px #111;">57号衣架</div>
<div class="r" style="left:1239px;top:379px;width:585px;height:1px;background:#f0f0f0;"></div>
</body></html>
